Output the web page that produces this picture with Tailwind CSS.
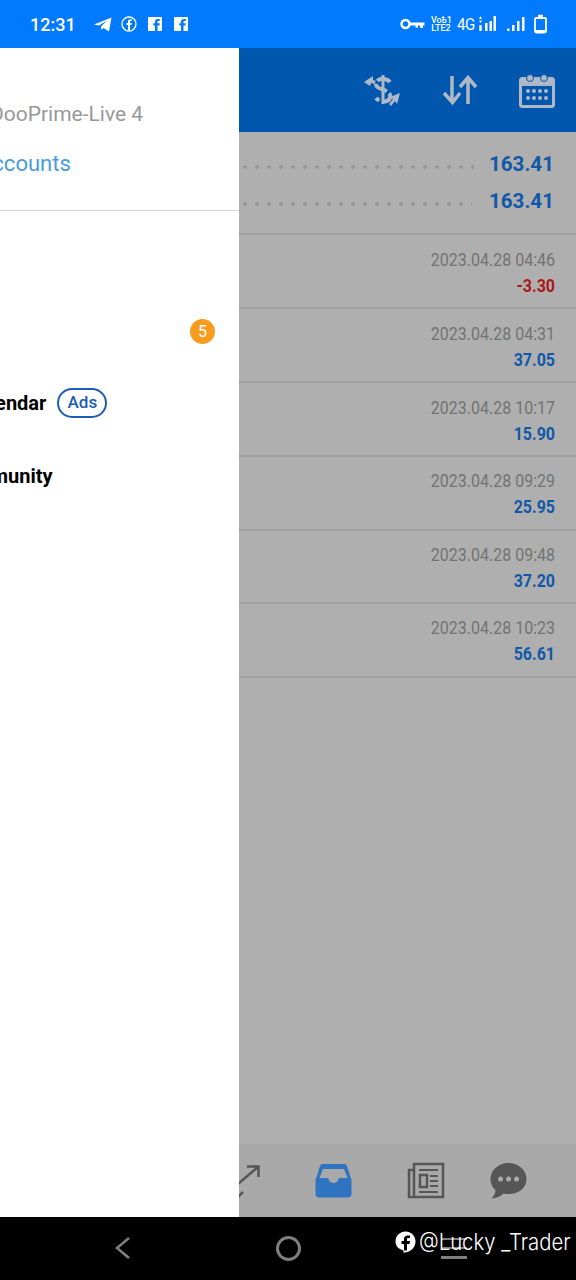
<!DOCTYPE html>
<html lang="en">
<head>
    <meta charset="UTF-8">
    <meta name="viewport" content="width=device-width, initial-scale=1.0">
    <title>Trade history</title>
    <script src="https://cdn.jsdelivr.net/npm/@tailwindcss/browser@4"></script>
</head>
<body class="bg-black font-['Roboto',sans-serif] w-[576px] h-[1280px] overflow-hidden flex flex-col">
    <!-- status bar -->
    <div class="h-12 bg-[#017afe] flex items-center justify-between pl-[30px] pr-[30px] text-white shrink-0">
        <div class="flex items-center">
            <span class="text-[18px] font-medium w-[64px]">12:31</span>
            <svg class="w-[18px] h-[15px]" viewBox="0 0 18 15"><path fill="#fff" d="M0 7.500 17.500 0.500 15 14.500 9.500 11 7.500 13 7 9.500 13 3.500 5 8.500z"/></svg>
            <svg class="w-[16px] h-[16px] ml-[9px]" viewBox="0 0 16 16"><circle cx="8" cy="8" r="7" fill="none" stroke="#fff" stroke-width="1.300"/><path fill="#fff" d="M7 14V9H5.500V7H7V5.500C7 4 8 3.200 9.300 3.200H10.700V5H9.800C9.200 5 9 5.300 9 5.800V7H10.700L10.400 9H9V14z"/></svg>
            <svg class="w-[16px] h-[16px] ml-[10px]" viewBox="0 0 16 16"><path fill="#fff" fill-rule="evenodd" d="M1 1h14v14H1zM8 15h2.500v-5.500h2l.3-2.300h-2.300V6c0-.7.300-1 1-1h1.300V3h-1.800C9 3 8 4 8 5.700v1.500H6.300v2.300H8z"/></svg>
            <svg class="w-[16px] h-[16px] ml-[10px]" viewBox="0 0 16 16"><path fill="#fff" fill-rule="evenodd" d="M1 1h14v14H1zM8 15h2.500v-5.500h2l.3-2.300h-2.300V6c0-.7.300-1 1-1h1.300V3h-1.800C9 3 8 4 8 5.700v1.500H6.300v2.300H8z"/></svg>
        </div>
        <div class="flex items-center mr-[-1px]">
            <svg class="w-[25px] h-[12px]" viewBox="0 0 25 12"><circle cx="5.500" cy="6" r="4" fill="none" stroke="#fff" stroke-width="2.500"/><path fill="#fff" d="M9 4.500h15.500v3H23v2.500h-3V7.500h-2V9.500h-2.500V7.500H9z"/></svg>
            <div class="ml-[6px] w-[20px] text-[9px] font-medium leading-[8px] text-center whitespace-nowrap">Vo&#1123;1<br>LTE2</div>
            <span class="ml-[6px] text-[15px] w-[17px] tracking-[-0.5px] scale-y-[1.15]">4G</span>
            <svg class="ml-[5px] w-[18px] h-[16px]" viewBox="0 0 18 16"><path fill="#fff" d="M1.500 0 3 3H0zM1.500 7 0 4.500h3zM.3 9h2.400v6H.3zM6 7h2.500v8H6zM14.500 0H17V15H14.500zM10.500 5H13V15H10.500z"/></svg>
            <svg class="ml-[10px] w-[18px] h-[16px]" viewBox="0 0 18 16"><path fill="#fff" d="M0 12.500h2.500V15H0zM5 9h2.500v6H5zM10 5h2.500v10H10zM15 1h2.500v14H15z"/></svg>
            <svg class="ml-[9px] w-[13px] h-[20px]" viewBox="0 0 13 20"><path fill="none" stroke="#fff" stroke-width="1.800" d="M2 4h9a1 1 0 0 1 1 1v12a1.500 1.500 0 0 1-1.500 1.500h-8A1.500 1.500 0 0 1 1 17V5a1 1 0 0 1 1-1z"/><path fill="#fff" d="M4 .8h5V4H4zM1 16h11v3H1z"/></svg>
        </div>
    </div>

    <div class="h-[1169px] flex shrink-0">
        <!-- drawer, scrolled past its left edge -->
        <div class="w-[239px] bg-white overflow-hidden shrink-0">
            <div class="h-[163px] border-b border-[#d6d6d6] pt-[54px]">
                <p class="ml-[-10px] whitespace-nowrap text-[21px] leading-6 text-[#989898]">DooPrime-Live 4</p>
                <p class="ml-[-22px] mt-[26px] whitespace-nowrap text-[22px] leading-6 text-[#4a9be0]">Accounts</p>
            </div>
            <div class="flex justify-end pr-[24px] pt-[108px]">
                <span class="w-[25px] h-[25px] rounded-full bg-[#f99b1c] text-white text-[16px] flex items-center justify-center">5</span>
            </div>
            <div class="mt-[44px] flex items-center h-[30px] ml-[-34px]">
                <span class="text-[20px] font-bold text-black whitespace-nowrap">Calendar</span>
                <span class="ml-[11px] w-[50px] h-[30px] rounded-full border-2 border-[#1c5db5] text-[#1c5db5] text-[17px] font-medium flex items-center justify-center">Ads</span>
            </div>
            <p class="ml-[-51px] mt-[46px] text-[20px] leading-6 font-bold text-black whitespace-nowrap">Community</p>
        </div>

        <!-- dimmed history page -->
        <div class="flex-1 bg-[#afafaf] flex flex-col min-w-0">
            <div class="h-[84px] bg-[#0157ae] flex items-center justify-end pr-[21px] shrink-0">
                <svg class="w-[38px] h-[34px]" viewBox="0 0 38 34" fill="#aeb8c6">
                    <path d="M18.500 2h3v29h-3z"/>
                    <path fill="none" stroke="#aeb8c6" stroke-width="4" stroke-dasharray="14 3" d="M27 9C24 5 14 4 13 11 12.500 16 21 16 23 18 26 20 28 21 27 25 25 30 16 29 13 25"/>
                    <path d="M1 9 10 3 10 7 13 8 11 11 8 10 7 13z"/>
                    <path d="M37 20 34 31 32 28 28 33 26 31 30 26 27 24z"/>
                </svg>
                <svg class="ml-[41px] w-[36px] h-[30px]" viewBox="0 0 36 30" fill="none" stroke="#aeb8c6" stroke-width="3.500"><path d="M10 1v26M2 18l8.500 9.500L18 18"/><path d="M26 29V3M18 12l8-9.500L34 12"/></svg>
                <svg class="ml-[41px] w-[36px] h-[35px]" viewBox="0 0 36 35"><rect x="1.500" y="5.500" width="33" height="28" rx="2" fill="none" stroke="#aeb8c6" stroke-width="3"/><rect x="1.500" y="5" width="33" height="8" fill="#aeb8c6"/><circle cx="11" cy="5" r="3.500" fill="#aeb8c6" stroke="#0157ae"/><circle cx="25" cy="5" r="3.500" fill="#aeb8c6" stroke="#0157ae"/><g fill="#aeb8c6"><circle cx="9" cy="18" r="2"/><circle cx="15" cy="18" r="2"/><circle cx="21" cy="18" r="2"/><circle cx="27" cy="18" r="2"/><circle cx="9" cy="25" r="2"/><circle cx="15" cy="25" r="2"/><circle cx="21" cy="25" r="2"/><circle cx="27" cy="25" r="2"/></g></svg>
            </div>

            <div class="h-[103px] border-b-2 border-[#a0a0a0] pr-[22px] pt-[13px] shrink-0">
                <div class="flex items-center h-[38px]">
                    <div class="flex-1 h-[4px] mt-[6px] bg-[radial-gradient(circle,#989898_1.600px,transparent_2px)] bg-[length:12px_4px]"></div>
                    <span class="ml-[15px] text-[20.600px] font-bold text-[#1159a8]">163.41</span>
                </div>
                <div class="flex items-center h-[36px]">
                    <div class="flex-1 h-[4px] mt-[6px] bg-[radial-gradient(circle,#989898_1.600px,transparent_2px)] bg-[length:12px_4px]"></div>
                    <span class="ml-[17px] text-[20.600px] font-bold text-[#1159a8]">163.41</span>
                </div>
            </div>

            <div class="h-[74px] border-b-2 border-[#a0a0a0] pr-[21px] pt-[13px] text-right shrink-0">
                <p class="text-[16px] leading-6 text-[#737373] scale-y-[1.15]">2023.04.28 04:46</p>
                <p class="mt-[1px] text-[16px] leading-[26px] font-bold text-[#ab1a1a] scale-y-[1.15]">-3.30</p>
            </div>
            <div class="h-[74px] border-b-2 border-[#a0a0a0] pr-[21px] pt-[13px] text-right shrink-0">
                <p class="text-[16px] leading-6 text-[#737373] scale-y-[1.15]">2023.04.28 04:31</p>
                <p class="mt-[1px] text-[16px] leading-[26px] font-bold text-[#1159a8] scale-y-[1.15]">37.05</p>
            </div>
            <div class="h-[74px] border-b-2 border-[#a0a0a0] pr-[21px] pt-[13px] text-right shrink-0">
                <p class="text-[16px] leading-6 text-[#737373] scale-y-[1.15]">2023.04.28 10:17</p>
                <p class="mt-[1px] text-[16px] leading-[26px] font-bold text-[#1159a8] scale-y-[1.15]">15.90</p>
            </div>
            <div class="h-[74px] border-b-2 border-[#a0a0a0] pr-[21px] pt-[12px] text-right shrink-0">
                <p class="text-[16px] leading-6 text-[#737373] scale-y-[1.15]">2023.04.28 09:29</p>
                <p class="mt-[1px] text-[16px] leading-[26px] font-bold text-[#1159a8] scale-y-[1.15]">25.95</p>
            </div>
            <div class="h-[73px] border-b-2 border-[#a0a0a0] pr-[21px] pt-[12px] text-right shrink-0">
                <p class="text-[16px] leading-6 text-[#737373] scale-y-[1.15]">2023.04.28 09:48</p>
                <p class="mt-[1px] text-[16px] leading-[26px] font-bold text-[#1159a8] scale-y-[1.15]">37.20</p>
            </div>
            <div class="h-[74px] border-b-2 border-[#a0a0a0] pr-[21px] pt-[12px] text-right shrink-0">
                <p class="text-[16px] leading-6 text-[#737373] scale-y-[1.15]">2023.04.28 10:23</p>
                <p class="mt-[1px] text-[16px] leading-[26px] font-bold text-[#1159a8] scale-y-[1.15]">56.61</p>
            </div>

            <div class="flex-1"></div>

            <!-- bottom tabs -->
            <div class="h-[73px] bg-[#a9a9a9] flex items-center shrink-0 overflow-hidden">
                <svg class="ml-[-3px] w-[24px] h-[34px]" viewBox="0 0 24 34" fill="none" stroke="#565656" stroke-width="2.500"><path d="M2 20 22 3M11 2.500h11.500V13M2 33l5-5"/></svg>
                <svg class="ml-[55px] w-[37px] h-[35px]" viewBox="0 0 37 35"><path fill="#2f74c0" d="M8 1h21c1.500 0 2.500.8 3 2l4.500 14v14c0 2-1.500 3.500-3.500 3.500H4C2 34.500.5 33 .5 31V17L5 3c.5-1.200 1.500-2 3-2z"/><path fill="#a9a9a9" d="M8 6h21l3.500 9h-7.500c-1 0-1.500.5-1.700 1.500-.5 2-2.500 3.500-4.800 3.500s-4.300-1.500-4.800-3.500c-.2-1-.7-1.500-1.700-1.500H4.500z"/></svg>
                <svg class="ml-[55px] w-[38px] h-[37px]" viewBox="0 0 38 37" fill="none" stroke="#565656" stroke-width="2.500"><path d="M7 2h29v33H7zM7 8H2v27h5"/><path d="M12 8h19M12 30h19" stroke-width="2"/><rect x="13" y="13" width="7" height="12" stroke-width="2.500"/><path d="M23 14h8M23 19h8M23 24h8" stroke-width="2"/></svg>
                <svg class="ml-[45px] w-[37px] h-[37px]" viewBox="0 0 37 37"><path fill="#565656" d="M18.500 1C28.500 1 36.500 8 36.500 17S28.500 32 18.500 32c-2 0-3.500-.2-5-.6C10.500 34.500 6.500 36 1.500 36.500 4 34 5.500 31 5.500 28 2 25 .5 21.500.5 17 .5 8 8.500 1 18.500 1z"/><circle cx="10.500" cy="17" r="2.500" fill="#a9a9a9"/><circle cx="18.500" cy="17" r="2.500" fill="#a9a9a9"/><circle cx="26.500" cy="17" r="2.500" fill="#a9a9a9"/></svg>
            </div>
        </div>
    </div>

    <!-- android nav bar with watermark -->
    <div class="flex-1 bg-black relative">
        <svg class="absolute left-[113px] top-[19px] w-[19px] h-[24px]" viewBox="0 0 19 24" fill="none" stroke="#808080" stroke-width="2.500"><path d="M16 2 4 12l12 10"/></svg>
        <div class="absolute left-[276px] top-[19px] w-[25px] h-[25px] rounded-full border-[3px] border-[#808080]"></div>
        <div class="absolute left-[441px] top-[21px] w-[26px] flex flex-col gap-[7px]">
            <div class="h-[2px] bg-[#808080]"></div>
            <div class="h-[2px] bg-[#808080]"></div>
            <div class="h-[3px] bg-[#808080]"></div>
        </div>
        <div class="absolute left-[395px] top-[12px] flex items-center text-white">
            <svg class="w-[21px] h-[22px]" viewBox="0 0 21 22"><path fill="#fff" fill-rule="evenodd" d="M10.500.5C16 .5 20.500 4.700 20.500 10.500c0 4.800-3 8.700-8 10.500L8.500 21.700V19.500C3.500 18 .5 15 .5 10.500.5 4.700 5 .5 10.500.5zM9 19.500H12V13h2.500l.5-3H12V8.300c0-.8.400-1.300 1.300-1.300H15V4.500h-2.500C10.300 4.500 9 6 9 8v2H6.500v3H9z"/></svg>
            <span class="ml-[3px] text-[20.300px] leading-[26px] font-['Inter',sans-serif] font-light scale-y-[1.1] whitespace-nowrap">@Lucky _Trader</span>
        </div>
    </div>
</body>
</html>
